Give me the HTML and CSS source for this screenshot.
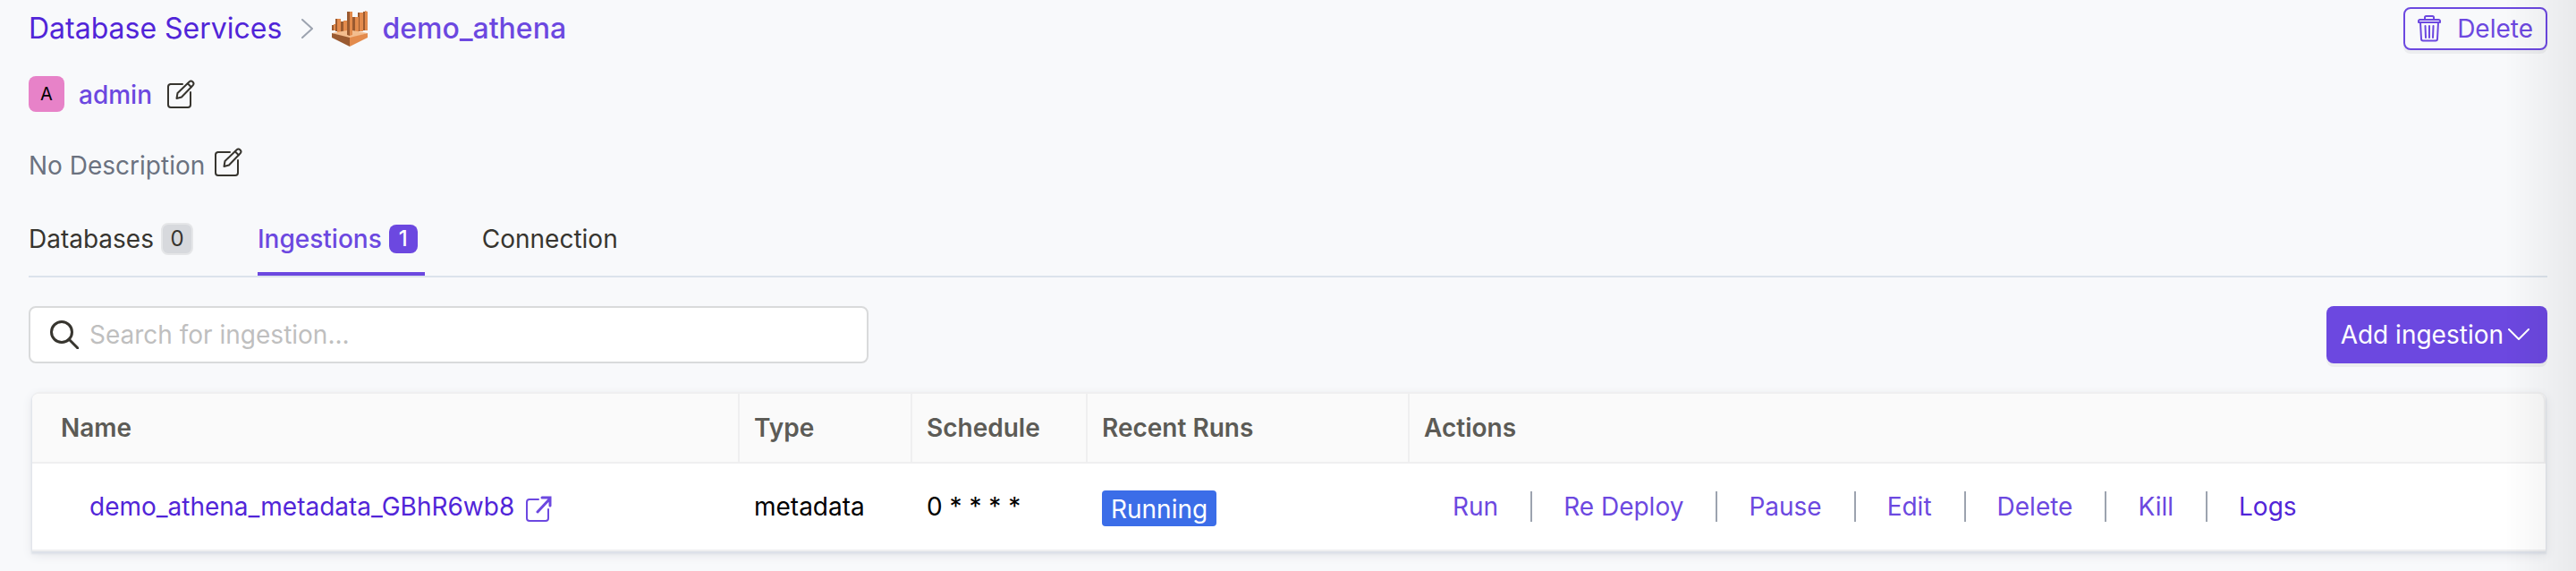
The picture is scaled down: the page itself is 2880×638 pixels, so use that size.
FILE: index.html
```html
<!DOCTYPE html>
<html lang="en">
<head>
<meta charset="utf-8">
<title>demo_athena</title>
<link rel="stylesheet" href="styles.css">
</head>
<body>
<svg class="sprite" aria-hidden="true">
  <symbol id="edit" viewBox="0 0 32 32">
    <path d="M18 5H4.500A3 3 0 0 0 2 8v20a3 3 0 0 0 3 3h19a3 3 0 0 0 3-3V14" />
    <path d="M11.500 21l1-6L25.500 2.500a2.800 2.800 0 0 1 4 4L17 19.500z" />
    <path d="M24 4.500l3.800 3.800" />
  </symbol>
</svg>
<main class="page">
  <header class="header">
    <nav class="crumbs" aria-label="Breadcrumb">
      <a href="#">Database Services</a>
      <svg class="crumb-arrow" viewBox="0 0 14 22"><path d="M1 1l11 10L1 21" /></svg>
      <svg class="service-logo" viewBox="0 0 40 40">
        <path fill="#9a5a30" d="M0 16h3v6H0zM4 9h4v14H4zM10 12h4v12h-4zM17 1h3v26h-3zM23 7h4v17h-4zM29 2h3v21h-3zM35 1h3v21h-3z" />
        <path fill="#e38b4c" d="M2 15h2v7H2zM6 9h4v15H6zM13 11h4v14h-4zM26 7h4v17h-4zM31 2h4v21h-4zM37 0l3 1v21h-3z" />
        <path fill="#f3bd8e" d="M0 25l17-3h6l17 3-20 6z" />
        <path fill="#9a5a30" d="M17 1h3v27l-3-1z" />
        <path fill="#e38b4c" d="M20 1h3v26l-3 1z" />
        <path fill="#9a5a30" d="M0 25l20 5v10L0 30z" />
        <path fill="#e38b4c" d="M40 25l-20 5v10l20-10z" />
      </svg>
      <a class="current" href="#">demo_athena</a>
    </nav>
    <button class="btn btn-outline" type="button">
      <svg class="trash" viewBox="0 0 26 30"><path d="M8 5V2.500A1.500 1.500 0 0 1 9.500 1h7A1.500 1.500 0 0 1 18 2.500V5M2.500 5h21a1.500 1.500 0 0 1 1.500 1.500V8H1V6.500A1.500 1.500 0 0 1 2.500 5zM3 8l1 18.500A2 2 0 0 0 6 28.500h14a2 2 0 0 0 2-2L23 8M8.500 12l.5 13M13 12v13M17.500 12l-.5 13" /></svg>
      Delete
    </button>
  </header>

  <div class="owner">
    <span class="avatar">A</span>
    <a href="#">admin</a>
    <button class="icon-btn" type="button" aria-label="Edit owner"><svg><use href="#edit" /></svg></button>
  </div>

  <div class="description">
    <span>No Description</span>
    <button class="icon-btn" type="button" aria-label="Edit description"><svg><use href="#edit" /></svg></button>
  </div>

  <nav class="tabs">
    <a class="tab" href="#">Databases <span class="count">0</span></a>
    <a class="tab active" href="#">Ingestions <span class="count">1</span></a>
    <a class="tab" href="#">Connection</a>
  </nav>

  <div class="toolbar">
    <label class="search">
      <svg viewBox="0 0 32 32"><circle cx="13" cy="13" r="11.500" /><path d="M21 21l10 10" /></svg>
      <input type="text" placeholder="Search for ingestion..." aria-label="Search for ingestion">
    </label>
    <button class="btn btn-primary" type="button">Add ingestion
      <svg class="chevron" viewBox="0 0 24 14"><path d="M1 1l11 11L23 1" /></svg>
    </button>
  </div>

  <div class="card">
    <table>
      <colgroup><col class="c-name"><col class="c-type"><col class="c-schedule"><col class="c-runs"><col></colgroup>
      <thead>
        <tr><th>Name</th><th>Type</th><th>Schedule</th><th>Recent Runs</th><th>Actions</th></tr>
      </thead>
      <tbody>
        <tr>
          <td><a class="pipeline" href="#">demo_athena_metadata_GBhR6wb8
            <svg viewBox="0 0 30 30"><path d="M15 4H5a3 3 0 0 0-3 3v18a3 3 0 0 0 3 3h18a3 3 0 0 0 3-3V15" /><path class="arrow" d="M14 18L28 3M19 2h9v9" /></svg></a></td>
          <td>metadata</td>
          <td>0 * * * *</td>
          <td><span class="status">Running</span></td>
          <td>
            <div class="actions">
              <button type="button">Run</button>
              <button type="button">Re Deploy</button>
              <button type="button">Pause</button>
              <button type="button">Edit</button>
              <button type="button">Delete</button>
              <button type="button">Kill</button>
              <a href="#">Logs</a>
            </div>
          </td>
        </tr>
      </tbody>
    </table>
  </div>
</main>
<div class="edge-shade"></div>
</body>
</html>
```
FILE: styles.css
```css
* { box-sizing: border-box; }
body {
  margin: 0;
  background: #f8f9fb;
  color: #000;
  font: 28px/40px Inter, "Liberation Sans", sans-serif;
}
a { color: #5125d8; text-decoration: none; }
button { font: inherit; cursor: pointer; }
svg { flex: none; fill: none; stroke: currentColor; stroke-width: 2; stroke-linecap: round; stroke-linejoin: round; }
.sprite { position: absolute; width: 0; height: 0; }
.page { padding: 8px 32px 20px; }

.header { display: flex; justify-content: space-between; align-items: flex-start; }
.crumbs { display: flex; align-items: center; height: 48px; font-size: 32px; }
.crumb-arrow { width: 14px; height: 22px; margin: 0 20px 0 22px; color: #9ca3af; }
.service-logo { width: 40px; height: 40px; margin-right: 16px; stroke: none; }
.crumbs .current, .owner a { color: #6c48e0; font-weight: 500; }

.btn { display: flex; align-items: center; border-radius: 8px; box-shadow: 0 4px 0 #ecedef; }
.btn-outline { height: 48px; padding: 0 14px; gap: 18px; border: 2px solid #6c48e0; background: #f8f9fb; color: #6c48e0; }
.trash { width: 26px; height: 30px; }
.btn-primary { height: 64px; padding: 0 20px 0 16px; gap: 5px; border: 0; background: #6c48e0; color: #fff; }
.chevron { width: 24px; height: 14px; }

.owner, .description { display: flex; align-items: center; }
.owner { margin-top: 28px; }
.owner a { padding-top: 2px; }
.avatar { width: 40px; margin-right: 16px; border-radius: 8px; background: #e782c8; font-size: 20px; text-align: center; }
.icon-btn { display: flex; padding: 0; border: 0; background: none; color: #37352f; }
.icon-btn svg { width: 32px; height: 32px; }
.owner .icon-btn { margin-left: 16px; }
.description { margin-top: 37px; color: #6b7280; }
.description span { padding-top: 2px; }
.description .icon-btn { margin: 0 0 6px 10px; }

.tabs { display: flex; gap: 64px; margin-top: 23px; border-bottom: 2px solid #dce3ec; }
.tab { display: flex; align-items: center; gap: 8px; height: 80px; padding: 2px 8px 0 0; border-bottom: 4px solid transparent; color: #37352f; }
.tab.active { border-color: #6c48e0; color: #6c48e0; font-weight: 500; }
.count { min-width: 36px; border: 2px solid #e5e6e8; border-radius: 8px; background: #d7d9dd; font-size: 24px; line-height: 32px; text-align: center; }
.active .count { min-width: 32px; border: 0; background: #6c48e0; color: #fff; }

.toolbar { display: flex; justify-content: space-between; margin-top: 32px; }
.search { display: flex; align-items: center; gap: 12px; width: 33.333%; height: 64px; padding: 0 22px; border: 2px solid #d9dadb; border-radius: 8px; background: #fff; color: #37352f; }
.search svg { width: 32px; height: 32px; stroke-width: 3; }
.search input { flex: 1; min-width: 0; padding: 0; border: 0; outline: 0; background: none; font: inherit; }
.search input::placeholder { color: #bfbfbf; opacity: 1; }

.card { margin: 32px 2px 0 4px; border: 2px solid #efeff0; border-width: 2px 0; border-radius: 8px 8px 0 0; background: #fff; box-shadow: 0 2px 2px 1px #dde1e8, 0 4px 12px #e2e4e8; }
table { width: 100%; border-collapse: separate; border-spacing: 0; table-layout: fixed; }
.c-name { width: 791px; }
.c-type { width: 193px; }
.c-schedule { width: 196px; }
.c-runs { width: 360px; }
th { height: 78px; padding: 0 16px; border-right: 2px solid #efeff0; border-bottom: 2px solid #efeff0; background: #fafafa; color: #5c5b56; font-weight: 600; text-align: left; }
th:first-child { padding-left: 32px; border-top-left-radius: 8px; }
th:last-child { border-top-right-radius: 8px; }
td { height: 96px; padding: 0 16px; }
td:first-child { padding-left: 64px; }
.pipeline { display: flex; align-items: center; gap: 12px; }
.pipeline svg { width: 30px; height: 30px; margin-top: 6px; color: #6c48e0; }
.pipeline .arrow { stroke-width: 3; stroke-linejoin: miter; }
.status { display: inline-block; margin-top: 4px; padding: 2px 10px 0; border-radius: 4px; background: #3b6de8; color: #fff; line-height: 38px; }
.actions { display: flex; align-items: center; padding-left: 32px; }
.actions > * { padding: 0; border: 0; background: none; line-height: 34px; }
.actions button { color: #6c48e0; }
.actions > * + * { margin-left: 36px; padding-left: 35px; border-left: 2px solid #9ca3af; }
.edge-shade { position: fixed; top: 0; right: 0; bottom: 0; width: 80px; background: linear-gradient(to right, transparent, rgba(0, 0, 0, .03) 50%, rgba(0, 0, 0, .06)); pointer-events: none; }
```
